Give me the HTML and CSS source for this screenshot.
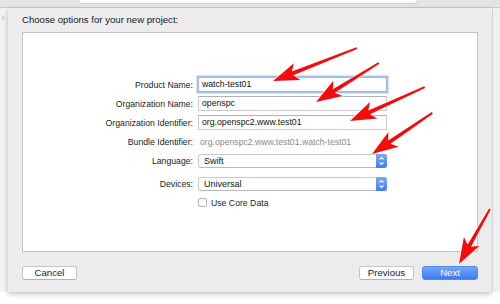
FILE: index.html
```html
<!DOCTYPE html>
<html>
<head>
  <title>Choose options for your new project</title>
  <meta name="viewport" content="width=device-width, initial-scale=1">
  <link rel="stylesheet" href="styles.css">
</head>
<body>
  <div id="window">
    <!-- Toolbar strip behind the sheet -->
    <div id="toolbar">
      <div class="toolbar-field"></div>
    </div>

    <div id="main">
      <div class="gutter left"><span class="chev">&#8250;</span></div>

      <!-- Project options sheet -->
      <div id="sheet">
        <div class="sheet-title">Choose options for your new project:</div>
        <div class="panel">
          <div class="form">
            <div class="row">
              <div class="label">Product Name:</div>
              <div class="field focused">watch-test01</div>
            </div>
            <div class="row">
              <div class="label">Organization Name:</div>
              <div class="field">openspc</div>
            </div>
            <div class="row">
              <div class="label">Organization Identifier:</div>
              <div class="field">org.openspc2.www.test01</div>
            </div>
            <div class="row">
              <div class="label">Bundle Identifier:</div>
              <div class="value">org.openspc2.www.test01.watch-test01</div>
            </div>
            <div class="row">
              <div class="label">Language:</div>
              <div class="popup">
                <span class="popup-text">Swift</span>
                <span class="stepper">
                  <svg viewBox="0 0 11 14" width="11" height="14">
                    <path d="M3.5 5.5 L5.5 3.5 L7.5 5.5 M3.5 8.5 L5.5 10.5 L7.5 8.5" fill="none" stroke="#fff" stroke-width="1.1"/>
                  </svg>
                </span>
              </div>
            </div>
            <div class="row spaced">
              <div class="label">Devices:</div>
              <div class="popup">
                <span class="popup-text">Universal</span>
                <span class="stepper">
                  <svg viewBox="0 0 11 14" width="11" height="14">
                    <path d="M3.5 5.5 L5.5 3.5 L7.5 5.5 M3.5 8.5 L5.5 10.5 L7.5 8.5" fill="none" stroke="#fff" stroke-width="1.1"/>
                  </svg>
                </span>
              </div>
            </div>
            <div class="row">
              <div class="label"></div>
              <label class="check"><span class="box"></span>Use Core Data</label>
            </div>
          </div>
        </div>
        <div class="buttons">
          <button class="btn">Cancel</button>
          <div class="spacer"></div>
          <button class="btn">Previous</button>
          <button class="btn primary">Next</button>
        </div>
      </div>

      <div class="gutter right"></div>
    </div>

    <!-- Red annotation arrows drawn over the screenshot -->
    <svg id="arrows" viewBox="0 0 500 304" width="500" height="304">
      <g fill="#f20c0c" stroke="#fff" stroke-width="1.2" stroke-linejoin="round" paint-order="stroke">
        <path transform="translate(273 81) rotate(158.6)" d="M0 0 L-26 -9 L-21 -2 L-90 -1 L-90 1 L-21 2 L-26 9 Z"/>
        <path transform="translate(316 102) rotate(148.2)" d="M0 0 L-26 -9 L-21 -2 L-74 -1 L-74 1 L-21 2 L-26 9 Z"/>
        <path transform="translate(350 121) rotate(155.6)" d="M0 0 L-26 -9 L-21 -2 L-82 -1 L-82 1 L-21 2 L-26 9 Z"/>
        <path transform="translate(372 154) rotate(145.7)" d="M0 0 L-26 -9 L-21 -2 L-73 -1 L-73 1 L-21 2 L-26 9 Z"/>
        <path transform="translate(459 264) rotate(119.4)" d="M0 0 L-26 -9 L-21 -2 L-63 -1 L-63 1 L-21 2 L-26 9 Z"/>
      </g>
    </svg>
  </div>
</body>
</html>
```

FILE: styles.css
```css
/* Base */
html, body {
  margin: 0;
  padding: 0;
  background: #ffffff;
  font-family: "Liberation Sans", Arial, sans-serif;
  color: #222;
}
#window {
  position: relative;
  width: 500px;
  height: 304px;
  overflow: hidden;
}
/* Toolbar strip */
#toolbar {
  height: 7px;
  background: #e4e4e4;
  border-bottom: 1px solid #c9c9c9;
}
.toolbar-field {
  margin-left: 80px;
  width: 337px;
  height: 3px;
  background: #fbfbfb;
  border: 1px solid #cfcfcf;
  border-top: none;
  border-left: none;
  border-radius: 0 0 3px 0;
}
/* Main row */
#main {
  display: flex;
  align-items: flex-start;
}
.gutter {
  height: 284px;
  background: #f3f3f3;
}
.gutter.left {
  width: 8px;
}
.gutter.right {
  flex: 1;
  border-left: 1px solid #d6d6d6;
  margin-left: 1px;
  background: #efefef;
}
.chev {
  display: block;
  font-size: 11px;
  line-height: 11px;
  padding: 4px 0 0 1px;
  color: #b5b5b5;
}
/* Sheet */
#sheet {
  width: 483px;
  height: 284px;
  box-sizing: border-box;
  padding: 0 13px 12px 14px;
  background: #ececec;
  box-shadow: 0 2px 5px rgba(0,0,0,0.25);
  display: flex;
  flex-direction: column;
}
.sheet-title {
  height: 24px;
  line-height: 24px;
  font-size: 9.6px;
  color: #1a1a1a;
}
.panel {
  height: 220px;
  box-sizing: border-box;
  background: #fff;
  border: 1px solid #c4c4c4;
  padding-top: 42px;
}
/* Form rows */
.form {
  display: flex;
  flex-direction: column;
}
.row {
  display: flex;
  align-items: center;
  height: 19px;
  gap: 5px;
}
.row.spaced {
  margin-top: 4px;
}
.label {
  width: 170px;
  text-align: right;
  font-size: 8.7px;
  color: #222;
}
.field {
  width: 189px;
  height: 15px;
  box-sizing: border-box;
  border: 1px solid #cacaca;
  border-top-color: #b3b3b3;
  padding: 0 3px;
  font-size: 8.7px;
  line-height: 13px;
  color: #111;
}
.field.focused {
  border-color: #9cb6ea;
  box-shadow: 0 0 0 1.5px #a9c3f5;
}
.value {
  padding-left: 2px;
  font-size: 8.7px;
  color: #8a8a8a;
}
.popup {
  width: 189px;
  height: 14px;
  box-sizing: border-box;
  display: flex;
  align-items: center;
  border: 1px solid #c9c9c9;
  border-bottom-color: #b9b9b9;
  border-radius: 3px;
  background: #fff;
  font-size: 9px;
  color: #111;
}
.popup-text {
  flex: 1;
  padding-left: 5px;
}
.stepper {
  width: 11px;
  height: 14px;
  margin-right: -1px;
  border-radius: 0 3px 3px 0;
  background: linear-gradient(#79a9f8, #3f7cf0);
  display: flex;
}
.check {
  display: flex;
  align-items: center;
  font-size: 8.7px;
  color: #222;
}
.box {
  width: 9px;
  height: 9px;
  box-sizing: border-box;
  border: 1px solid #b4b4b4;
  border-radius: 2px;
  background: #fff;
  margin-right: 4px;
}
/* Bottom buttons */
.buttons {
  display: flex;
  gap: 8px;
  margin-top: 14px;
  height: 14px;
}
.spacer {
  flex: 1;
}
.btn {
  width: 55px;
  height: 14px;
  padding: 0;
  box-sizing: border-box;
  border: 1px solid #c6c6c6;
  border-bottom-color: #b2b2b2;
  border-radius: 3px;
  background: #fff;
  font-family: "Liberation Sans", Arial, sans-serif;
  font-size: 9.6px;
  line-height: 12px;
  color: #1a1a1a;
}
.btn.primary {
  width: 56px;
  border-color: #4f88ee;
  background: linear-gradient(#74a6f9, #3d7af0);
  color: #fff;
}
/* Annotation overlay */
#arrows {
  position: absolute;
  left: 0;
  top: 0;
  pointer-events: none;
}
```
